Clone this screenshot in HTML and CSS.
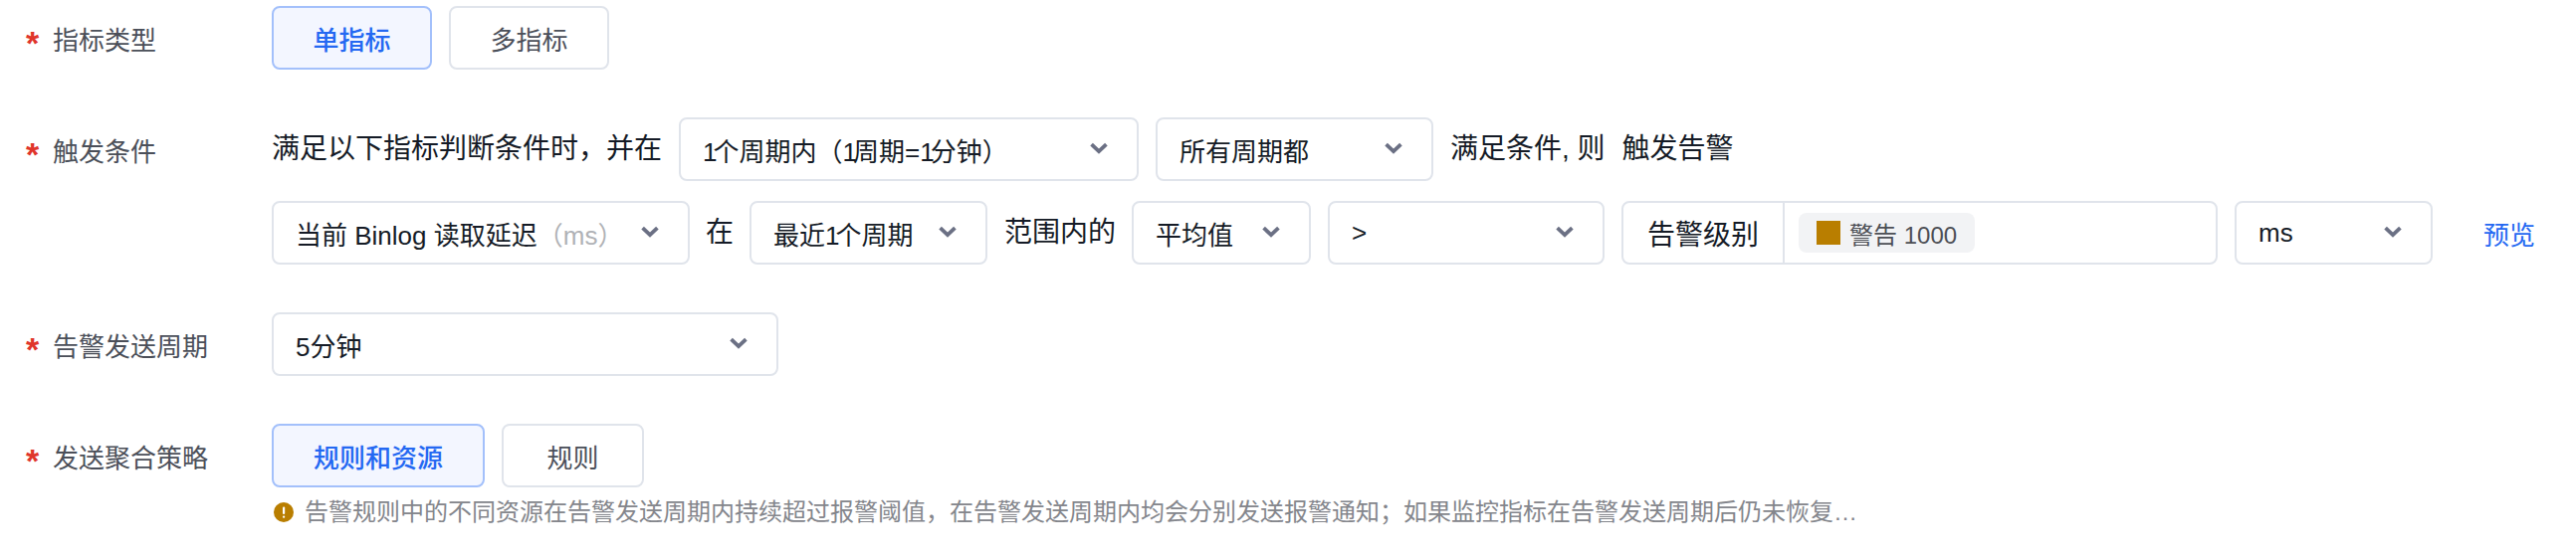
FILE: index.html
```html
<!DOCTYPE html>
<html lang="zh-CN">
<head>
<meta charset="utf-8">
<title>告警规则</title>
<link rel="stylesheet" href="styles.css">
</head>
<body>
<form class="form">
  <div class="row">
    <div class="label"><span class="star">*</span><span>指标类型</span></div>
    <div class="control">
      <div class="line">
        <button type="button" class="btn active w-161">单指标</button>
        <button type="button" class="btn w-161">多指标</button>
      </div>
    </div>
  </div>

  <div class="row">
    <div class="label"><span class="star">*</span><span>触发条件</span></div>
    <div class="control">
      <div class="line">
        <span class="word">满足以下指标判断条件时，并在</span>
        <div class="select w-462"><span><span class="one">1</span>个周期内（<span class="one">1</span>周期=<span class="one">1</span>分钟）</span><svg class="chev" viewBox="0 0 18 12"><path d="M1.6 2.2 9 9.2l7.4-7"/></svg></div>
        <div class="select w-279"><span>所有周期都</span><svg class="chev" viewBox="0 0 18 12"><path d="M1.6 2.2 9 9.2l7.4-7"/></svg></div>
        <span class="word">满足条件, 则</span>
        <span class="word">触发告警</span>
      </div>
      <div class="line">
        <div class="select w-420"><span>当前 Binlog 读取延迟<span class="unit">（ms）</span></span><svg class="chev" viewBox="0 0 18 12"><path d="M1.6 2.2 9 9.2l7.4-7"/></svg></div>
        <span class="word tight">在</span>
        <div class="select w-239"><span>最近<span class="one">1</span>个周期</span><svg class="chev" viewBox="0 0 18 12"><path d="M1.6 2.2 9 9.2l7.4-7"/></svg></div>
        <span class="word">范围内的</span>
        <div class="select w-180"><span>平均值</span><svg class="chev" viewBox="0 0 18 12"><path d="M1.6 2.2 9 9.2l7.4-7"/></svg></div>
        <div class="select w-278"><span>&gt;</span><svg class="chev" viewBox="0 0 18 12"><path d="M1.6 2.2 9 9.2l7.4-7"/></svg></div>
        <div class="group">
          <span class="addon">告警级别</span>
          <div class="group-body"><span class="tag"><i class="swatch"></i>警告 1000</span></div>
        </div>
        <div class="select w-199"><span>ms</span><svg class="chev" viewBox="0 0 18 12"><path d="M1.6 2.2 9 9.2l7.4-7"/></svg></div>
        <a class="link">预览</a>
      </div>
    </div>
  </div>

  <div class="row">
    <div class="label"><span class="star">*</span><span>告警发送周期</span></div>
    <div class="control">
      <div class="line">
        <div class="select w-509"><span>5分钟</span><svg class="chev" viewBox="0 0 18 12"><path d="M1.6 2.2 9 9.2l7.4-7"/></svg></div>
      </div>
    </div>
  </div>

  <div class="row">
    <div class="label"><span class="star">*</span><span>发送聚合策略</span></div>
    <div class="control">
      <div class="line">
        <button type="button" class="btn active w-214">规则和资源</button>
        <button type="button" class="btn w-143">规则</button>
      </div>
      <p class="help">
        <svg class="help-icon" viewBox="0 0 20 20"><circle cx="10" cy="10" r="10"/><rect class="mark" x="9" y="4.5" width="2.2" height="7.5" rx="1"/><rect class="mark" x="9" y="13.5" width="2.2" height="2.2" rx="1"/></svg>
        <span>告警规则中的不同资源在告警发送周期内持续超过报警阈值，在告警发送周期内均会分别发送报警通知；如果监控指标在告警发送周期后仍未恢复…</span>
      </p>
    </div>
  </div>
</form>
</body>
</html>
```
FILE: styles.css
```css
* { box-sizing: border-box; }
html, body { margin: 0; padding: 0; background: #fff; }
body {
  width: 2588px;
  height: 562px;
  overflow: hidden;
  font-family: "Liberation Sans", "Noto Sans CJK SC", sans-serif;
  font-size: 26px;
  color: #151b26;
}
.form { display: flex; flex-direction: column; gap: 48px; padding-top: 6px; }
.row { display: flex; align-items: flex-start; }
.label {
  width: 273px;
  height: 64px;
  padding-left: 26px;
  display: flex;
  align-items: center;
  color: #4b4f59;
  flex: none;
}
.star {
  width: 27px;
  color: #e0352b;
  font-size: 34px;
  font-weight: 700;
  line-height: 34px;
  padding-top: 9px;
}
.control { display: flex; flex-direction: column; }
.line { display: flex; align-items: center; gap: 17px; }
.line + .line { margin-top: 20px; }
.word { font-size: 28px; line-height: 64px; color: #151b26; white-space: pre; }
.tight { width: 27px; margin-left: -1px; }
.one { letter-spacing: -4px; }
.btn {
  height: 64px;
  padding: 0;
  font: inherit;
  color: #4b4f59;
  background: #fff;
  border: 2px solid #e0e4eb;
  border-radius: 8px;
}
.btn.active { color: #2468f2; font-weight: 500; background: #f3f6ff; border-color: #a3c0fb; }
.w-161 { width: 161px; }
.w-214 { width: 214px; }
.w-143 { width: 143px; }
.select {
  height: 64px;
  padding: 0 29px 0 22px;
  display: flex;
  align-items: center;
  justify-content: space-between;
  border: 2px solid #e0e4eb;
  border-radius: 8px;
  background: #fff;
  color: #151b26;
  flex: none;
}
.w-462 { width: 462px; }
.w-279 { width: 279px; }
.w-420 { width: 420px; }
.w-239 { width: 239px; }
.w-180 { width: 180px; margin-left: -1px; }
.w-278 { width: 278px; }
.w-199 { width: 199px; }
.w-509 { width: 509px; }
.unit { color: #b0b2b6; }
.chev { width: 18px; height: 12px; flex: none; margin-top: -2px; fill: none; stroke: #6b7084; stroke-width: 3.8; }
.group {
  width: 599px;
  height: 64px;
  display: flex;
  align-items: stretch;
  border: 2px solid #e0e4eb;
  border-radius: 8px;
  flex: none;
}
.addon {
  width: 162px;
  display: flex;
  align-items: center;
  justify-content: center;
  border-right: 2px solid #e0e4eb;
  font-size: 28px;
  color: #151b26;
}
.group-body { flex: 1; display: flex; align-items: center; padding-left: 14px; }
.tag {
  height: 40px;
  padding: 0 18px;
  display: flex;
  align-items: center;
  gap: 9px;
  font-size: 24px;
  color: #4d4f55;
  background: #f2f3f5;
  border-radius: 8px;
}
.swatch { width: 24px; height: 24px; background: #b97e00; display: block; }
.link { margin-left: 34px; color: #2468f2; }
.help {
  margin: 9px 0 0;
  padding-left: 2px;
  display: flex;
  align-items: center;
  gap: 11px;
  font-size: 24px;
  line-height: 32px;
  color: #84868c;
}
.help-icon { width: 20px; height: 20px; flex: none; fill: #b97e00; }
.help-icon .mark { fill: #fff; }
```
